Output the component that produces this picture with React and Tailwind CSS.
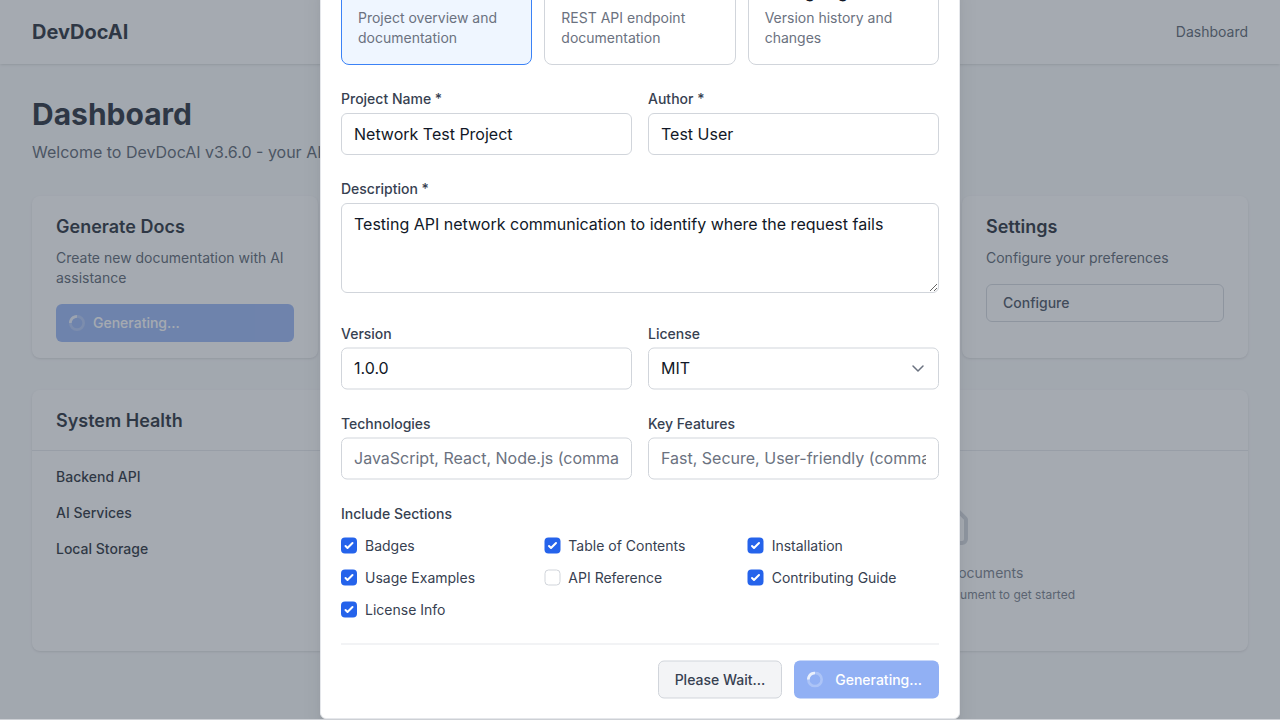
const sections = [
  ['Badges', true],
  ['Table of Contents', true],
  ['Installation', true],
  ['Usage Examples', true],
  ['API Reference', false],
  ['Contributing Guide', true],
  ['License Info', true],
];

const columnShift = ['', 'translate-x-[0.5px]', '-translate-x-[0.5px]'];

const label = 'block text-sm font-medium text-[#374151]';
const field =
  'mt-1 block h-[42px] w-full appearance-none rounded-md border border-[#d1d5db] bg-white px-3 text-base text-[#111827] placeholder:text-[#6b7280]';
const evenField = `${field} py-2`;
const raisedField = `${field} pt-[7px] pb-[9px] -translate-y-[0.5px]`;

function Spinner() {
  return (
    <svg className="h-4 w-4 shrink-0" viewBox="0 0 24 24" fill="none">
      <circle className="opacity-25" cx="12" cy="12" r="10" stroke="white" strokeWidth="4" />
      <path className="opacity-75" fill="white" d="M4 12a8 8 0 018-8V0C5.373 0 0 5.373 0 12h4z" />
    </svg>
  );
}

function Checkbox({ text, checked, shift }) {
  return (
    <label className="flex items-center text-sm text-[#374151]">
      <span
        className={
          checked
            ? `flex h-4 w-4 -translate-y-[0.5px] items-center justify-center rounded bg-[#2563eb] ${shift}`
            : `h-4 w-4 -translate-y-[0.5px] rounded border border-[#d1d5db] bg-white ${shift}`
        }
      >
        {checked && (
          <svg className="h-4 w-4" viewBox="0 0 16 16" fill="white">
            <path d="M12.207 4.793a1 1 0 010 1.414l-5 5a1 1 0 01-1.414 0l-2-2a1 1 0 011.414-1.414L6.5 9.086l4.293-4.293a1 1 0 011.414 0z" />
          </svg>
        )}
      </span>
      <span className="ml-2">{text}</span>
    </label>
  );
}

function TypeCard({ title, text, selected }) {
  return (
    <div
      className={
        selected
          ? 'h-[102px] rounded-lg border border-[#3b82f6] bg-[#eff6ff] p-4'
          : 'h-[102px] rounded-lg border border-[#d1d5db] bg-white p-4'
      }
    >
      <h4 className="text-base font-medium text-[#111827]">{title}</h4>
      <p className="mt-1 text-sm text-[#6b7280]">{text}</p>
    </div>
  );
}

function ActionCard({ title, text, children }) {
  return (
    <section className="h-[162px] rounded-lg bg-white px-6 pt-5 shadow-sm">
      <h3 className="mb-2.5 text-lg leading-[22px] font-semibold text-[#111827]">{title}</h3>
      <p className="mb-4 text-sm text-[#4b5563]">{text}</p>
      {children}
    </section>
  );
}

function Dashboard() {
  return (
    <div className="flex h-[720px] flex-col bg-[#f9fafb]">
      <header className="flex h-16 shrink-0 items-center justify-between bg-white px-8 shadow-sm">
        <span className="text-xl font-bold text-[#111827]">DevDocAI</span>
        <span className="text-sm text-[#4b5563]">Dashboard</span>
      </header>
      <main className="px-8 pt-8">
        <h1 className="text-3xl leading-9 font-bold text-[#111827]">Dashboard</h1>
        <p className="mt-2 text-base text-[#4b5563]">Welcome to DevDocAI v3.6.0 - your AI-powered documentation assistant</p>
        <div className="mt-8 grid grid-cols-4 gap-6">
          <ActionCard title="Generate Docs" text="Create new documentation with AI assistance">
            <div className="flex h-[38px] items-center rounded-md bg-[#2563eb] px-[13px] text-sm font-medium text-white opacity-50">
              <Spinner />
              <span className="ml-2">Generating...</span>
            </div>
          </ActionCard>
          <ActionCard title="Templates" text="Browse templates" />
          <ActionCard title="Documents" text="Browse documents" />
          <ActionCard title="Settings" text="Configure your preferences">
            <div className="flex h-[38px] items-center rounded-md border border-[#d1d5db] px-4 text-sm font-medium text-[#374151]">
              Configure
            </div>
          </ActionCard>
        </div>
        <div className="mt-8 grid grid-cols-2 gap-8">
          <section className="h-[261px] rounded-lg bg-white shadow-sm">
            <h2 className="flex h-[61px] items-center border-b border-[#e5e7eb] px-6 pt-px text-lg font-semibold text-[#111827]">
              System Health
            </h2>
            <div className="flex flex-col gap-4 px-6 pt-4 text-sm font-medium text-[#111827]">
              <span>Backend API</span>
              <span>AI Services</span>
              <span>Local Storage</span>
            </div>
          </section>
          <section className="h-[261px] rounded-lg bg-white shadow-sm">
            <h2 className="flex h-[61px] items-center border-b border-[#e5e7eb] px-6 pt-px text-lg font-semibold text-[#111827]">
              Recent Documents
            </h2>
            <div className="flex flex-col items-center pt-[50px]">
              <svg className="h-12 w-12 text-[#d1d5db]" viewBox="0 0 24 24" fill="none" stroke="currentColor" strokeWidth="2">
                <path
                  strokeLinecap="round"
                  strokeLinejoin="round"
                  d="M7 21h10a2 2 0 002-2V9.414a1 1 0 00-.293-.707l-5.414-5.414A1 1 0 0012.586 3H7a2 2 0 00-2 2v14a2 2 0 002 2z"
                />
              </svg>
              <p className="mt-3.5 text-sm text-[#6b7280]">No recent documents</p>
              <p className="mt-1 text-xs text-[#6b7280]">Generate your first document to get started</p>
            </div>
          </section>
        </div>
      </main>
    </div>
  );
}

function Modal() {
  return (
    <div className="-mt-[38px] h-[757px] w-[640px] rounded-md border border-[#e5e7eb] bg-white px-5 shadow-xl">
      <div className="grid grid-cols-3 gap-3">
        <TypeCard title="README" text="Project overview and documentation" selected />
        <TypeCard title="API Docs" text="REST API endpoint documentation" />
        <TypeCard title="Changelog" text="Version history and changes" />
      </div>
      <div className="mt-6 grid grid-cols-2 gap-4">
        <div>
          <label className={label}>Project Name *</label>
          <input className={evenField} defaultValue="Network Test Project" />
        </div>
        <div>
          <label className={label}>Author *</label>
          <input className={evenField} defaultValue="Test User" />
        </div>
      </div>
      <div className="mt-6 h-[121px]">
        <label className={label}>Description *</label>
        <textarea
          className="mt-1 block h-[90px] w-full rounded-md border border-[#d1d5db] bg-white px-3 py-2 text-base text-[#111827]"
          defaultValue="Testing API network communication to identify where the request fails"
        />
      </div>
      <div className="mt-6 grid grid-cols-2 gap-x-4 gap-y-6">
        <div>
          <label className={label}>Version</label>
          <input className={raisedField} defaultValue="1.0.0" />
        </div>
        <div>
          <label className={label}>License</label>
          <div className="mt-1 flex h-[42px] -translate-y-[0.5px] items-center justify-between rounded-md border border-[#d1d5db] bg-white pr-2.5 pl-3 text-base text-[#111827]">
            <span className="pb-0.5">MIT</span>
            <svg className="h-5 w-5" viewBox="0 0 20 20" fill="none">
              <path d="M5 7.5l5 5 5-5" stroke="#6b7280" strokeWidth="1.5" strokeLinecap="round" strokeLinejoin="round" />
            </svg>
          </div>
        </div>
        <div>
          <label className={label}>Technologies</label>
          <input className={raisedField} placeholder="JavaScript, React, Node.js (comma-separated)" />
        </div>
        <div>
          <label className={label}>Key Features</label>
          <input className={raisedField} placeholder="Fast, Secure, User-friendly (comma-separated)" />
        </div>
      </div>
      <div className="mt-6">
        <span className={label}>Include Sections</span>
        <div className="mt-3 grid grid-cols-3 gap-3">
          {sections.map(([text, checked], i) => (
            <Checkbox key={text} text={text} checked={checked} shift={columnShift[i % 3]} />
          ))}
        </div>
      </div>
      <div className="mt-6 flex -translate-y-[0.5px] justify-end gap-3 border-t border-[#e5e7eb] pt-4">
        <button className="h-[38px] rounded-md border border-[#d1d5db] bg-[#f3f4f6] px-4 text-sm font-medium text-[#374151]">
          Please Wait...
        </button>
        <button className="flex h-[38px] items-center rounded-md bg-[#2563eb] pr-[17px] pl-[13px] text-sm font-medium text-white opacity-50">
          <Spinner />
          <span className="ml-3">Generating...</span>
        </button>
      </div>
    </div>
  );
}

export default function App() {
  return (
    <div className="relative h-[720px] w-[1280px] overflow-hidden bg-white font-['Inter',sans-serif]">
      <Dashboard />
      <div className="absolute inset-x-0 top-0 flex h-[719px] items-start justify-center overflow-hidden bg-[#4b5563]/50">
        <Modal />
      </div>
      <div className="absolute inset-x-0 bottom-0 h-px bg-[#4b5563]/25" />
    </div>
  );
}
